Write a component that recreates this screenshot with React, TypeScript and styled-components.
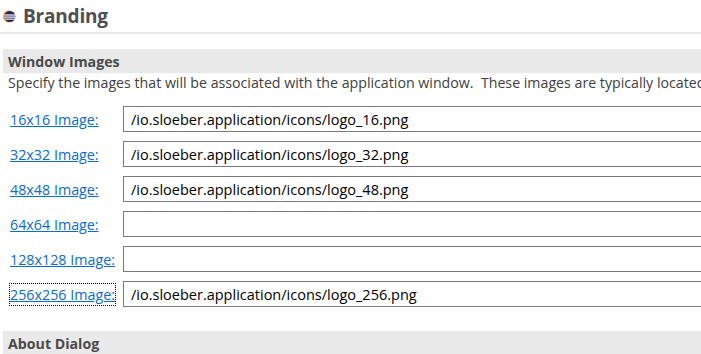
import styled, { createGlobalStyle } from "styled-components";

const GlobalStyle = createGlobalStyle`
  body {
    margin: 0;
    background: #ffffff;
    font-family: "Open Sans", "Noto Sans", sans-serif;
    overflow: hidden;
  }
`;

const Page = styled.div`
  width: 701px;
  height: 354px;
  overflow: hidden;
`;

const TitleBar = styled.div`
  display: flex;
  align-items: center;
  gap: 7px;
  height: 32px;
  padding-left: 3px;
  border-bottom: 2px solid #e8e8e8;
`;

const Title = styled.h1`
  margin: 0;
  font-size: 19px;
  font-weight: 700;
  color: #4f4f4f;
  letter-spacing: -0.2px;
`;

const Section = styled.section<{ $top: number }>`
  margin-left: 3px;
  margin-top: ${(p) => p.$top}px;
`;

const SectionHeader = styled.div`
  height: 24px;
  display: flex;
  align-items: center;
  padding-left: 5px;
  background: #e9e9e9;
  font-size: 14.2px;
  font-weight: 700;
  color: #4a4a4a;
`;

const Description = styled.p`
  margin: 0;
  padding-left: 5px;
  height: 20px;
  line-height: 20px;
  font-size: 14.2px;
  color: #404040;
  white-space: nowrap;
  overflow: hidden;
`;

const Rows = styled.div`
  display: grid;
  grid-template-columns: 113px 1fr;
  grid-auto-rows: 26px;
  row-gap: 9px;
  margin-top: 13px;
  padding-left: 7px;
`;

const LabelCell = styled.div`
  display: flex;
  align-items: center;
`;

const ImageLink = styled.a<{ $focused?: boolean }>`
  font-size: 14.3px;
  color: #0a6ad6;
  text-decoration: underline;
  cursor: pointer;
  padding: 1px 0;
  white-space: nowrap;
  outline: ${(p) => (p.$focused ? "1px dotted #000" : "none")};
`;

const PathInput = styled.input`
  width: 620px;
  height: 26px;
  box-sizing: border-box;
  border: 1px solid #7a7a7a;
  padding: 0 7px;
  font-family: "Open Sans", "Noto Sans", sans-serif;
  font-size: 14.5px;
  color: #000;
  background: #fff;
  outline: none;
`;

const EclipseIcon = () => (
  <svg width="13" height="13" viewBox="0 0 13 13">
    <circle cx="6" cy="6.5" r="6" fill="#f7941e" />
    <circle cx="6.8" cy="6.5" r="5.6" fill="#2c2255" />
    <rect x="1.2" y="4.4" width="11.2" height="1.2" fill="#fff" />
    <rect x="1" y="6.5" width="11.4" height="1.2" fill="#fff" />
    <rect x="1.6" y="8.6" width="10.4" height="1.1" fill="#fff" />
  </svg>
);

const images = [
  { size: "16x16", path: "/io.sloeber.application/icons/logo_16.png" },
  { size: "32x32", path: "/io.sloeber.application/icons/logo_32.png" },
  { size: "48x48", path: "/io.sloeber.application/icons/logo_48.png" },
  { size: "64x64", path: "" },
  { size: "128x128", path: "" },
  { size: "256x256", path: "/io.sloeber.application/icons/logo_256.png" },
];

export default function App() {
  return (
    <Page>
      <GlobalStyle />
      <TitleBar>
        <EclipseIcon />
        <Title>Branding</Title>
      </TitleBar>
      <Section $top={15}>
        <SectionHeader>Window Images</SectionHeader>
        <Description>
          Specify the images that will be associated with the application window.&nbsp; These images are
          typically located in a plug-in.
        </Description>
        <Rows>
          {images.map((img) => [
            <LabelCell key={img.size + "-label"}>
              <ImageLink $focused={img.size === "256x256"}>{img.size} Image:</ImageLink>
            </LabelCell>,
            <PathInput key={img.size + "-input"} defaultValue={img.path} />,
          ])}
        </Rows>
      </Section>
      <Section $top={24}>
        <SectionHeader>About Dialog</SectionHeader>
      </Section>
    </Page>
  );
}
